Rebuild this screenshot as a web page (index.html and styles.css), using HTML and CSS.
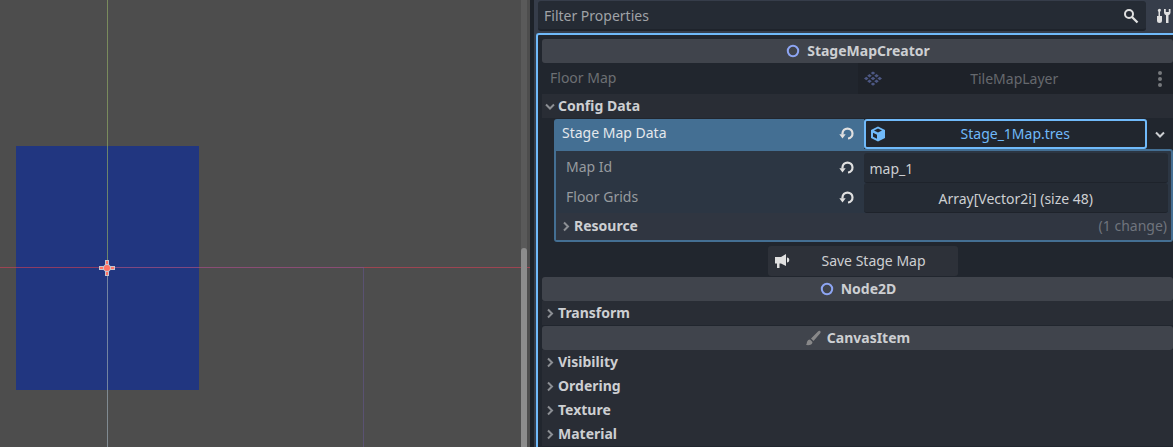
FILE: index.html
```html
<!DOCTYPE html>
<html lang="en">
<head>
<meta charset="utf-8">
<title>Scene editor</title>
<link rel="stylesheet" href="styles.css">
</head>
<body>
<svg class="defs" aria-hidden="true">
  <symbol id="node" viewBox="0 0 16 16"><circle cx="8" cy="8" r="5.2" fill="none" stroke="#8da5f3" stroke-width="2"/></symbol>
  <symbol id="right" viewBox="0 0 16 16"><path d="M6 4.500l4 4-4 4" fill="none" stroke="#8c8f94" stroke-width="2"/></symbol>
  <symbol id="down" viewBox="0 0 16 16"><path d="M4 6.500l4 4 4-4" fill="none" stroke="currentColor" stroke-width="2"/></symbol>
  <symbol id="revert" viewBox="0 0 16 16"><path d="M3.500 8.500V7.300a5 5 0 1 1 5.500 5.200" fill="none" stroke="currentColor" stroke-width="2.200"/><path d="M.3 8.300h6.400L3.500 12.500z" fill="currentColor"/></symbol>
</svg>
<main class="editor">
  <section class="viewport" aria-label="2D viewport">
    <div class="tilemap"></div>
    <div class="axis-x"></div>
    <div class="bounds"></div>
    <div class="axis-y"></div>
    <svg class="origin" viewBox="0 0 16 16"><path d="M6 0h4v4.500L11.500 6H16v4h-4.500L10 11.500V16H6v-4.500L4.500 10H0V6h4.500L6 4.500z" fill="#c5c4cf"/><circle cx="8" cy="8" r="3" fill="#ff7264"/><path d="M8 1v3M8 12v3M1 8h3M12 8h3" stroke="#ff7264" stroke-width="2"/></svg>
    <div class="scroll"><div class="thumb"></div></div>
  </section>
  <section class="dock" aria-label="Inspector">
    <div class="toolbar">
      <label class="filter"><input type="text" placeholder="Filter Properties" aria-label="Filter Properties">
        <svg class="icon" viewBox="0 0 16 16"><circle cx="6" cy="6" r="4" fill="none" stroke="#e0e0e0" stroke-width="2"/><path d="M9 9l5.500 5.500" stroke="#e0e0e0" stroke-width="2.300"/></svg>
      </label>
      <button class="tools" aria-label="Manage object properties"><svg class="icon" viewBox="0 0 16 16"><path d="M4 1a1.300 1.300 0 0 0-1 2l.5 1v4H2v4.500a2.500 2.500 0 0 0 5 0V8H5V4l.6-1A1.300 1.300 0 0 0 4 1zM9 1v3.500a3 3 0 0 0 2 2.800V15h2.500V7.300a3 3 0 0 0 2-2.800V1h-1.700v3h-3V1z" fill="#e0e0e0"/></svg></button>
    </div>
    <div class="inspector">
      <h2 class="category"><svg class="icon"><use href="#node"/></svg>StageMapCreator</h2>
      <div class="row disabled">
        <span class="name">Floor Map</span>
        <div class="value">
          <button class="resource" disabled><svg class="icon wide" viewBox="0 0 18 16"><path d="M9 .5L11.300 2 9 3.700 6.700 2zM5.500 3L7.800 4.700 5.500 6.400 3.200 4.700zM12.500 3l2.300 1.700-2.300 1.700-2.300-1.700zM9 5.800l2.300 1.700L9 9.200 6.700 7.500zM2.300 5.800l2.300 1.700-2.300 1.700L0 7.500zM15.700 5.800L18 7.500l-2.300 1.700-2.300-1.700zM5.500 8.600l2.300 1.700L5.500 12l-2.300-1.700zM12.500 8.600l2.300 1.700-2.300 1.700-2.300-1.700zM9 11.400l2.300 1.700L9 14.800l-2.300-1.700z" fill="#4d5884"/></svg><span>TileMapLayer</span></button>
          <button class="menu" disabled aria-label="Options"><svg class="icon" viewBox="0 0 16 16"><g fill="#76797d"><circle cx="8" cy="2" r="2"/><circle cx="8" cy="8" r="2"/><circle cx="8" cy="14" r="2"/></g></svg></button>
        </div>
      </div>
      <button class="section"><svg class="icon muted"><use href="#down"/></svg>Config Data</button>
      <div class="group">
        <div class="row selected">
          <span class="name">Stage Map Data</span>
          <button class="revert" aria-label="Revert Stage Map Data"><svg class="icon"><use href="#revert"/></svg></button>
          <div class="value">
            <button class="resource current"><svg class="icon" viewBox="0 0 16 16"><path d="M8 .5L15 4v8l-7 3.500L1 12V4z" fill="#70bafa"/><path d="M4 4.500l4-2 4 2-4 2zM3 6.800l4 2v4l-4-2z" fill="#21262e"/></svg><span>Stage_1Map.tres</span></button>
            <button class="menu" aria-label="Resource options"><svg class="icon"><use href="#down"/></svg></button>
          </div>
        </div>
        <div class="sub">
          <div class="row">
            <label class="name" for="mapid">Map Id</label>
            <button class="revert" aria-label="Revert Map Id"><svg class="icon"><use href="#revert"/></svg></button>
            <div class="value"><input class="field" id="mapid" type="text" value="map_1"></div>
          </div>
          <div class="row">
            <span class="name">Floor Grids</span>
            <button class="revert" aria-label="Revert Floor Grids"><svg class="icon"><use href="#revert"/></svg></button>
            <div class="value"><button class="field array">Array[Vector2i] (size 48)</button></div>
          </div>
          <button class="section"><svg class="icon"><use href="#right"/></svg>Resource<span class="changes">(1 change)</span></button>
        </div>
      </div>
      <button class="save"><svg class="icon" viewBox="0 0 16 16"><path d="M12 1v12L7 10.500H5.500V15H3v-4.500H1V4h6zM13 4.500c3 0 3 5 0 5z" fill="#e0e0e0"/></svg><span>Save Stage Map</span></button>
      <h2 class="category"><svg class="icon"><use href="#node"/></svg>Node2D</h2>
      <button class="section"><svg class="icon"><use href="#right"/></svg>Transform</button>
      <h2 class="category"><svg class="icon" viewBox="0 0 16 16"><path d="M15 1c1 .8.800 1.600 0 2.500L8.500 11 6 8.500 13 1.500c.7-.7 1.400-1 2-.5zM5 9.500L7.500 12c0 3-3.500 3.500-6.500 3 1-1 .5-2 1.200-3.500C2.700 10.200 3.700 9.500 5 9.500z" fill="#888889"/></svg>CanvasItem</h2>
      <button class="section"><svg class="icon"><use href="#right"/></svg>Visibility</button>
      <button class="section"><svg class="icon"><use href="#right"/></svg>Ordering</button>
      <button class="section"><svg class="icon"><use href="#right"/></svg>Texture</button>
      <button class="section"><svg class="icon"><use href="#right"/></svg>Material</button>
    </div>
  </section>
</main>
</body>
</html>
```
FILE: styles.css
```css
* { box-sizing: border-box; }
body { margin: 0; background: #1d2229; }
body, button, input { font-family: "Noto Sans", sans-serif; font-size: 14px; line-height: 20px; color: #cdcfd2; }
button, input { margin: 0; padding: 0; border: 0; background: none; }
.defs { position: absolute; width: 0; height: 0; }
.icon { width: 16px; height: 16px; flex: none; display: block; }
.wide { width: 18px; }
.editor { display: grid; grid-template-columns: 530fr 639fr; column-gap: 4px; height: 100vh; overflow: hidden; }

.viewport { position: relative; background: #4d4d4d; overflow: hidden; }
.tilemap { position: absolute; left: 16px; top: 146px; width: 183px; height: 244px; background: #213680; }
.axis-x { position: absolute; left: 0; right: 0; top: 267px; height: 1px; background: rgba(200, 65, 85, 0.65); }
.axis-y { position: absolute; top: 0; bottom: 0; left: 107px; width: 1px; background: linear-gradient(rgba(140, 165, 100, 0.7) 267px, rgba(150, 165, 175, 0.7) 267px); }
.bounds { position: absolute; left: 107px; top: 267px; width: 257px; bottom: 0; border: solid rgba(110, 90, 170, 0.4); border-width: 1px 1px 0 0; }
.origin { position: absolute; left: 99px; top: 260px; width: 16px; height: 16px; }
.scroll { position: absolute; right: 3px; top: 0; bottom: 0; width: 6px; background: #5a5a5a; }
.thumb { position: absolute; left: 0; right: 0; top: 248px; bottom: 0; border-radius: 3px 3px 0 0; background: #8c8c8c; }

.dock { display: flex; flex-direction: column; min-width: 0; background: #363d4a; padding-left: 2px; overflow: hidden; }
.toolbar { display: flex; flex: none; height: 33px; padding: 1px 2px 2px; }
.filter { display: flex; flex: 1; align-items: center; padding: 2px 7px 0 6px; background: #252b34; border-bottom: 2px solid #1e232b; border-radius: 3px; }
.filter input { flex: 1; min-width: 0; outline: 0; }
.filter input::placeholder { color: #a0a3a7; opacity: 1; }
.tools { display: flex; align-items: center; padding-left: 9px; }

.inspector { display: flex; flex-direction: column; flex: 1; min-height: 0; overflow: hidden; background: #21262e; border: solid #70bafa; border-width: 2px 0 0 2px; border-radius: 3px 0 0 0; padding: 3px 0 0 4px; }
.inspector > * { flex: none; }
.category { display: flex; align-items: center; justify-content: center; gap: 6px; height: 24px; margin: 1px 0 0; padding-bottom: 1px; font-size: 14px; line-height: 20px; font-weight: 700; background: #40444c; border-radius: 3px; }
.section { display: flex; align-items: center; height: 24px; width: 100%; font-weight: 700; background: #292d35; }
.changes { margin-left: auto; padding-right: 4px; font-weight: 400; color: #6f747d; }
.muted { color: #8c8f94; }

.row { display: flex; height: 31px; }
.name { flex: 1; padding: 4px 8px; color: #979b9f; }
.value { display: flex; width: 50%; flex: none; }
.revert { display: flex; align-items: center; padding-right: 9px; color: #e0e0e0; }
.resource { display: flex; flex: 1; align-items: center; padding-left: 6px; }
.resource span { flex: 1; text-align: center; }
.menu { display: flex; align-items: center; justify-content: center; width: 26px; }
.disabled .name { padding-top: 5px; color: #6c6f73; }
.disabled .value { background: #1e2229; }
.disabled .resource { color: #66696e; }

.group { margin: 1px 0 0 12px; }
.selected { height: 30px; background: #446f93; border-radius: 3px 3px 0 0; }
.selected .name { color: #e4e8ec; }
.selected .value { background: #21262e; }
.current { padding-left: 4px; border: 2px solid #70bafa; border-radius: 3px; color: #70bafa; }
.sub { padding-top: 2px; background: #2c3643; border: 2px solid #446f93; border-radius: 0 3px 3px 3px; }
.sub .row { height: 30px; }
.sub .row .name { padding-left: 10px; }
.field { flex: 1; min-width: 0; margin-right: 3px; padding: 2px 6px 0; background: #252b34; border-bottom: 1px solid #1e232b; border-radius: 3px; outline: 0; }
.array { text-align: center; }
.sub .section { height: 27px; padding: 0 0 2px 2px; background: #303641; }
.save { display: flex; align-items: center; align-self: center; gap: 6px; width: 190px; height: 30px; margin: 4px 0 0 10px; padding: 0 6px; background: #2d3139; border-radius: 3px; }
.save span { flex: 1; text-align: center; }
```
